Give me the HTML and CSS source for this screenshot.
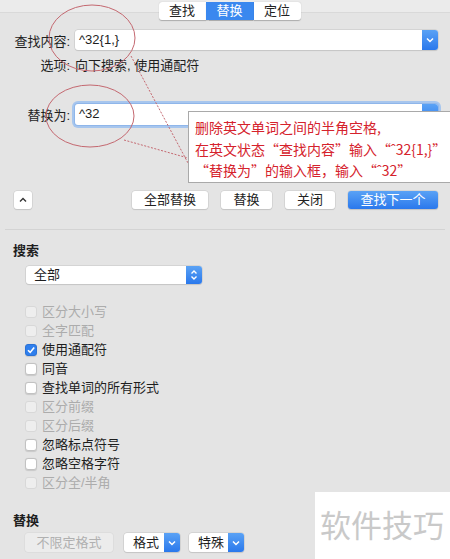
FILE: index.html
```html
<!DOCTYPE html>
<html lang="zh-CN">
<head>
  <meta charset="UTF-8">
  <meta name="viewport" content="width=device-width, initial-scale=1.0">
  <title>查找和替换</title>
  <link rel="stylesheet" href="styles.css">
</head>
<body>
  <div class="panel">
    <div class="tabs">
      <button type="button" class="tab">查找</button>
      <button type="button" class="tab active">替换</button>
      <button type="button" class="tab">定位</button>
    </div>

    <div class="field-row find-row">
      <label class="field-label">查找内容:</label>
      <div class="combo">
        <span class="combo-text">^32{1,}</span>
        <span class="combo-arrow">
          <svg width="8" height="6" viewBox="0 0 8 6"><path d="M1 1.5 L4 4.5 L7 1.5" fill="none" stroke="#fff" stroke-width="1.5"/></svg>
        </span>
      </div>
    </div>

    <div class="field-row options-row">
      <span class="field-label">选项:</span>
      <span class="options-text">向下搜索, 使用通配符</span>
    </div>

    <div class="field-row replace-row">
      <label class="field-label">替换为:</label>
      <div class="combo focused">
        <span class="combo-text">^32</span>
        <span class="combo-arrow">
          <svg width="8" height="6" viewBox="0 0 8 6"><path d="M1 1.5 L4 4.5 L7 1.5" fill="none" stroke="#fff" stroke-width="1.5"/></svg>
        </span>
      </div>
    </div>

    <div class="actions">
      <button type="button" class="btn btn-toggle">
        <svg width="8" height="6" viewBox="0 0 8 6"><path d="M1 4.5 L4 1.5 L7 4.5" fill="none" stroke="#333" stroke-width="1.4"/></svg>
      </button>
      <div class="action-group">
        <button type="button" class="btn btn-all">全部替换</button>
        <button type="button" class="btn btn-one">替换</button>
        <button type="button" class="btn btn-close">关闭</button>
        <button type="button" class="btn btn-primary">查找下一个</button>
      </div>
    </div>

    <div class="divider"></div>

    <h3 class="section-title">搜索</h3>
    <div class="select">
      <span class="select-text">全部</span>
      <span class="select-stepper">
        <svg width="8" height="12" viewBox="0 0 8 12"><path d="M1.5 4.5 L4 2 L6.5 4.5 M1.5 7.5 L4 10 L6.5 7.5" fill="none" stroke="#fff" stroke-width="1.4"/></svg>
      </span>
    </div>

    <ul class="checks">
      <li class="check disabled"><span class="box"></span>区分大小写</li>
      <li class="check disabled"><span class="box"></span>全字匹配</li>
      <li class="check checked"><span class="box">
        <svg width="10" height="10" viewBox="0 0 10 10"><path d="M2 5.2 L4.2 7.4 L8.2 2.4" fill="none" stroke="#fff" stroke-width="1.6"/></svg>
      </span>使用通配符</li>
      <li class="check"><span class="box"></span>同音</li>
      <li class="check"><span class="box"></span>查找单词的所有形式</li>
      <li class="check disabled"><span class="box"></span>区分前缀</li>
      <li class="check disabled"><span class="box"></span>区分后缀</li>
      <li class="check"><span class="box"></span>忽略标点符号</li>
      <li class="check"><span class="box"></span>忽略空格字符</li>
      <li class="check disabled"><span class="box"></span>区分全/半角</li>
    </ul>

    <h3 class="section-title replace-title">替换</h3>
    <div class="format-row">
      <button type="button" class="btn btn-disabled">不限定格式</button>
      <div class="popup popup-format">
        <span class="popup-text">格式</span>
        <span class="combo-arrow">
          <svg width="8" height="6" viewBox="0 0 8 6"><path d="M1 1.5 L4 4.5 L7 1.5" fill="none" stroke="#fff" stroke-width="1.5"/></svg>
        </span>
      </div>
      <div class="popup popup-special">
        <span class="popup-text">特殊</span>
        <span class="combo-arrow">
          <svg width="8" height="6" viewBox="0 0 8 6"><path d="M1 1.5 L4 4.5 L7 1.5" fill="none" stroke="#fff" stroke-width="1.5"/></svg>
        </span>
      </div>
    </div>
  </div>

  <!-- annotation drawn over the dialog -->
  <svg class="marks" width="450" height="559" viewBox="0 0 450 559">
    <ellipse cx="92" cy="38" rx="43" ry="33" fill="none" stroke="#c46870" stroke-width="1"/>
    <ellipse cx="90" cy="116" rx="44" ry="31" fill="none" stroke="#c46870" stroke-width="1"/>
    <line x1="131" y1="56" x2="188" y2="163" stroke="#c46870" stroke-width="1" stroke-dasharray="2 1.5"/>
    <line x1="124" y1="140" x2="188" y2="158" stroke="#c46870" stroke-width="1" stroke-dasharray="2 1.5"/>
  </svg>

  <div class="callout">
    <p>删除英文单词之间的半角空格,</p>
    <p>在英文状态“查找内容”输入“ˆ32{1,}”</p>
    <p>“替换为”的输入框，输入“ˆ32”</p>
  </div>

  <div class="watermark">软件技巧</div>
</body>
</html>
```

FILE: styles.css
```css
body {
  margin: 0;
  padding: 0;
  width: 450px;
  height: 559px;
  overflow: hidden;
  position: relative;
  font-family: "Liberation Sans", "Noto Sans CJK SC", sans-serif;
  font-size: 13px;
  color: #1e1e1e;
  background: linear-gradient(#ebebeb 0, #ebebeb 12px, #d9d9d9 12px, #d9d9d9 13px, #e4e4e4 13px);
}

.panel {
  padding: 2px 12px 0 13px;
}

button {
  font-family: inherit;
}

/* segmented control */
.tabs {
  display: flex;
  justify-content: center;
  margin-left: 8px;
}

.tab {
  width: 47px;
  height: 18px;
  padding: 0;
  border: none;
  background: #fff;
  color: #222;
  font-size: 13px;
  line-height: 18px;
  box-shadow: 0 0.5px 1px rgba(0, 0, 0, 0.25);
}

.tab:first-child {
  border-radius: 3px 0 0 3px;
}

.tab:last-child {
  border-radius: 0 3px 3px 0;
}

.tab.active {
  background: #3a88ef;
  color: #fff;
  width: 48px;
}

/* label + field rows */
.field-row {
  display: grid;
  grid-template-columns: 57px 1fr;
  column-gap: 5px;
  align-items: center;
}

.field-label {
  text-align: right;
  white-space: nowrap;
}

.find-row {
  margin-top: 10px;
}

.options-row {
  margin-top: 8px;
  height: 16px;
  line-height: 16px;
}

.replace-row {
  margin-top: 30px;
}

.combo {
  display: flex;
  height: 20px;
  background: #fff;
  border-radius: 3px;
  box-shadow: 0 0 0 0.5px #c4c4c4, 0 1px 1px rgba(0, 0, 0, 0.12);
}

.combo.focused {
  height: 21px;
  box-shadow: 0 0 0 1px #8fb6ea, 0 0 0 3px #a7c6ee;
}

.combo-text {
  flex: 1;
  padding-left: 4px;
  line-height: 20px;
  font-size: 13px;
}

.combo-arrow {
  width: 16px;
  display: flex;
  align-items: center;
  justify-content: center;
  background: linear-gradient(#5aa2f5, #2a78ec);
  border-radius: 0 3px 3px 0;
}

/* buttons */
.actions {
  margin-top: 66px;
  display: flex;
  justify-content: space-between;
  align-items: center;
}

.action-group {
  display: flex;
  gap: 13px;
}

.btn {
  height: 18px;
  padding: 0;
  border: none;
  border-radius: 3px;
  background: #fff;
  color: #222;
  font-size: 13px;
  line-height: 18px;
  box-shadow: 0 0 0 0.5px #c8c8c8, 0 1px 1px rgba(0, 0, 0, 0.15);
}

.btn-toggle {
  width: 18px;
  margin-left: 1px;
  display: flex;
  align-items: center;
  justify-content: center;
}

.btn-all {
  width: 76px;
}

.btn-one {
  width: 51px;
}

.btn-close {
  width: 50px;
}

.btn-primary {
  width: 90px;
  background: linear-gradient(#5aa2f5, #2a78ec);
  color: #fff;
}

.divider {
  margin: 20px -7px 0 -8px;
  border-top: 1px solid #d3d3d3;
}

.section-title {
  margin: 13px 0 0;
  font-size: 13px;
  font-weight: bold;
  line-height: 16px;
}

/* popup select */
.select {
  margin: 7px 0 0 13px;
  width: 176px;
  height: 18px;
  display: flex;
  background: #fff;
  border-radius: 3px;
  box-shadow: 0 0 0 0.5px #c4c4c4, 0 1px 1px rgba(0, 0, 0, 0.12);
}

.select-text {
  flex: 1;
  padding-left: 8px;
  line-height: 18px;
}

.select-stepper {
  width: 16px;
  display: flex;
  align-items: center;
  justify-content: center;
  background: linear-gradient(#5aa2f5, #2a78ec);
  border-radius: 0 3px 3px 0;
}

/* checkboxes */
.checks {
  list-style: none;
  margin: 18px 0 0;
  padding: 0 0 0 12px;
}

.check {
  display: flex;
  align-items: center;
  gap: 5px;
  height: 19px;
  line-height: 19px;
}

.box {
  width: 12px;
  height: 12px;
  box-sizing: border-box;
  border-radius: 3px;
  background: #fff;
  border: 0.5px solid #c2c2c2;
  box-shadow: 0 0.5px 1px rgba(0, 0, 0, 0.12);
  display: flex;
  align-items: center;
  justify-content: center;
}

.check.disabled {
  color: #acacac;
}

.check.disabled .box {
  background: #eeeeee;
  border-color: #d8d8d8;
  box-shadow: none;
}

.check.checked .box {
  background: #2f7fed;
  border-color: #2a72d6;
}

.replace-title {
  margin-top: 21px;
}

.format-row {
  margin: 4px 0 0 12px;
  display: flex;
  align-items: center;
}

.btn-disabled {
  width: 88px;
  height: 19px;
  color: #b0b0b0;
  background: #ececec;
  box-shadow: 0 0 0 0.5px #d6d6d6;
}

.popup {
  display: flex;
  height: 19px;
  background: #fff;
  border-radius: 3px;
  box-shadow: 0 0 0 0.5px #c4c4c4, 0 1px 1px rgba(0, 0, 0, 0.12);
}

.popup-text {
  flex: 1;
  padding-left: 9px;
  line-height: 19px;
}

.popup-format {
  width: 56px;
  margin-left: 11px;
}

.popup-special {
  width: 55px;
  margin-left: 9px;
}

/* annotation */
.marks {
  position: absolute;
  left: 0;
  top: 0;
  pointer-events: none;
}

.callout {
  position: absolute;
  left: 188px;
  top: 111px;
  width: 270px;
  height: 72px;
  box-sizing: border-box;
  padding: 5px 0 0 6px;
  background: #fff;
  border: 1px solid #a9a9a9;
  color: #d5222c;
  font-family: "Noto Sans CJK SC", sans-serif;
  font-size: 14px;
}

.callout p {
  margin: 0;
  line-height: 21.5px;
  white-space: nowrap;
}

.watermark {
  position: absolute;
  left: 315px;
  top: 492px;
  width: 135px;
  height: 67px;
  box-sizing: border-box;
  padding: 12px 0 0 5px;
  background: #fff;
  color: #c9c9c9;
  font-family: "Noto Sans CJK SC", sans-serif;
  font-size: 31px;
  line-height: 40px;
  letter-spacing: 0;
}
```
